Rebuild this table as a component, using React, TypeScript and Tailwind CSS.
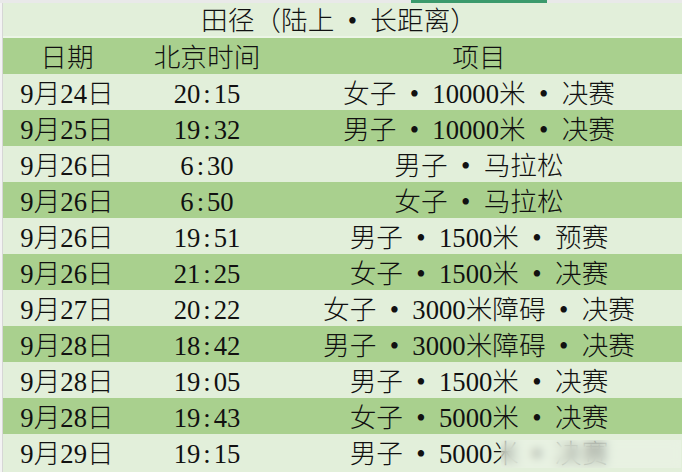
import React from "react";

type Row = { date: string; time: string; item: string[] };

const rows: Row[] = [
  { date: "9月24日", time: "20:15", item: ["女子", "10000米", "决赛"] },
  { date: "9月25日", time: "19:32", item: ["男子", "10000米", "决赛"] },
  { date: "9月26日", time: "6:30", item: ["男子", "马拉松"] },
  { date: "9月26日", time: "6:50", item: ["女子", "马拉松"] },
  { date: "9月26日", time: "19:51", item: ["男子", "1500米", "预赛"] },
  { date: "9月26日", time: "21:25", item: ["女子", "1500米", "决赛"] },
  { date: "9月27日", time: "20:22", item: ["女子", "3000米障碍", "决赛"] },
  { date: "9月28日", time: "18:42", item: ["男子", "3000米障碍", "决赛"] },
  { date: "9月28日", time: "19:05", item: ["男子", "1500米", "决赛"] },
  { date: "9月28日", time: "19:43", item: ["女子", "5000米", "决赛"] },
  { date: "9月29日", time: "19:15", item: ["男子", "5000米", "决赛"] },
];

function Dot() {
  return <span className="inline-block w-[36px] text-center">•</span>;
}

function Time({ t }: { t: string }) {
  const [h, m] = t.split(":");
  return (
    <span>
      {h}
      <span className="mx-[3px]">:</span>
      {m}
    </span>
  );
}

function Item({ parts }: { parts: string[] }) {
  return (
    <span className="whitespace-nowrap">
      {parts.map((p, i) => (
        <React.Fragment key={i}>
          {i > 0 && <Dot />}
          {p}
        </React.Fragment>
      ))}
    </span>
  );
}

const LIGHT = "bg-[#e2efda]";
const DARK = "bg-[#a9d08e]";

export default function App() {
  return (
    <div
      className="w-[682px] h-[472px] overflow-hidden bg-white text-[#111] text-[26.67px] leading-none font-light"
      style={{ fontFamily: '"Liberation Serif", "Noto Sans CJK SC", serif' }}
    >
      <div className="flex h-[3px] bg-[#e9e9e9]">
        <div className="w-[411px]" />
        <div className="w-[136px] bg-[#3b9a6c]" />
      </div>
      <div className="flex">
        <div className="w-[3px] bg-[#f3f3f3] border-r border-[#d6d6d6] shrink-0" />
        <div className="flex-1 flex flex-col">
          <div className={`h-[35px] ${LIGHT} border-b-2 border-[#ecf5e6] grid grid-cols-[128px_152px_392px_1fr] items-center`}>
            <div className="col-span-3 text-center pt-[4px]">
              田径（陆上<Dot />长距离）
            </div>
          </div>
          <div className={`h-[36px] ${DARK} grid grid-cols-[128px_152px_392px_1fr] items-center`}>
            <div className="text-center pt-[5px]">日期</div>
            <div className="text-center pt-[5px]">北京时间</div>
            <div className="text-center pt-[5px]">项目</div>
            <div />
          </div>
          {rows.map((r, i) => (
            <div
              key={i}
              className={`h-[36px] ${i % 2 === 0 ? LIGHT : DARK} grid grid-cols-[128px_152px_392px_1fr] items-center`}
            >
              <div className="text-center pt-[5px]">{r.date}</div>
              <div className="text-center pt-[5px]">
                <Time t={r.time} />
              </div>
              <div className="relative text-center pt-[5px]">
                <Item parts={r.item} />
                {i === rows.length - 1 && (
                  <div className="absolute left-[218px] right-[-6px] top-[4px] bottom-[0px] backdrop-blur-[5px] bg-[#eef4ea]/50" />
                )}
              </div>
              <div />
            </div>
          ))}
          <div className={`h-[2px] ${LIGHT}`} />
        </div>
      </div>
    </div>
  );
}
